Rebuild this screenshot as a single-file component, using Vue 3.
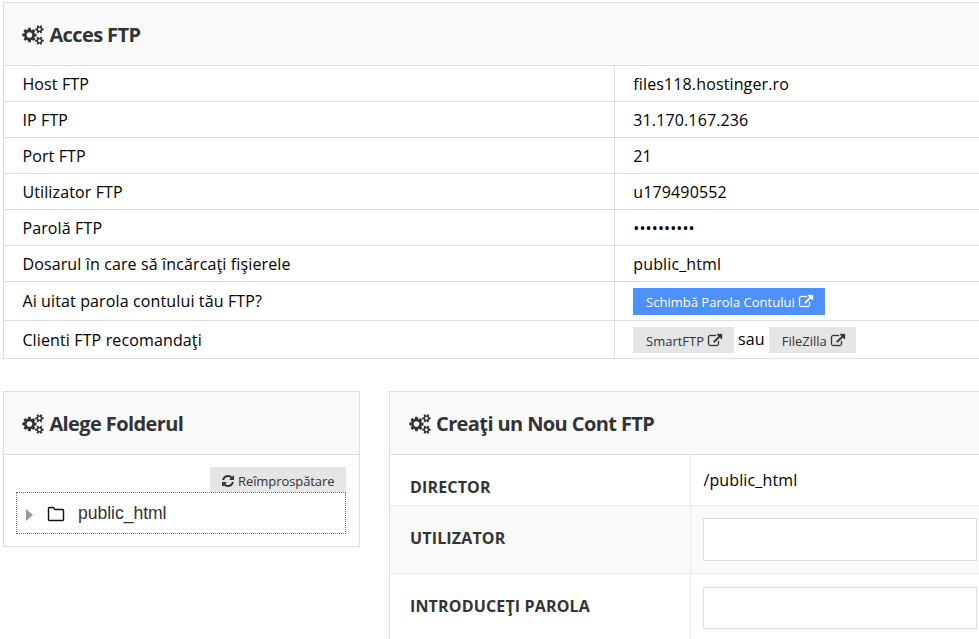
<script setup>
import { h } from 'vue'

const shapes = {
  cogs: {
    box: '0 0 1920 1792',
    d: 'M896 896q0-106-75-181t-181-75-181 75-75 181 75 181 181 75 181-75 75-181zm768 512q0-52-38-90t-90-38-90 38-38 90q0 53 37.5 90.5t90.5 37.5 90.5-37.5 37.5-90.5zm0-1024q0-52-38-90t-90-38-90 38-38 90q0 53 37.5 90.5t90.5 37.5 90.5-37.5 37.5-90.5zm-384 421v185q0 10-7 19.5t-16 10.5l-155 24q-11 35-32 76 34 48 90 115 7 11 7 20 0 12-7 19-23 30-82.5 89.5t-78.5 59.5q-11 0-21-7l-115-90q-37 19-77 31-11 108-23 155-7 24-30 24h-186q-11 0-20-7.5t-10-17.5l-23-153q-34-10-75-31l-118 89q-7 7-20 7-11 0-21-8-144-133-144-160 0-9 7-19 10-14 41-53t47-61q-23-44-35-82l-152-24q-10-1-17-9.5t-7-19.5v-185q0-10 7-19.5t16-10.5l155-24q11-35 32-76-34-48-90-115-7-11-7-20 0-12 7-20 22-30 82-89t79-59q11 0 21 7l115 90q34-18 77-32 11-108 23-154 7-24 30-24h186q11 0 20 7.5t10 17.5l23 153q34 10 75 31l118-89q8-7 20-7 11 0 21 8 144 133 144 160 0 9-7 19-12 16-42 54t-45 60q23 48 34 82l152 23q10 2 17 10.5t7 19.5zm640 533v140q0 16-149 31-12 27-30 52 51 113 51 138 0 4-4 7-122 71-124 71-8 0-46-47t-52-68q-20 2-30 2t-30-2q-14 21-52 68t-46 47q-2 0-124-71-4-3-4-7 0-25 51-138-18-25-30-52-149-15-149-31v-140q0-16 149-31 13-29 30-52-51-113-51-138 0-4 4-7 4-2 35-20t59-34 30-16q8 0 46 46.5t52 67.5q20-2 30-2t30 2q51-71 92-112l6-2q4 0 124 70 4 3 4 7 0 25-51 138 17 23 30 52 149 15 149 31zm0-1024v140q0 16-149 31-12 27-30 52 51 113 51 138 0 4-4 7-122 71-124 71-8 0-46-47t-52-68q-20 2-30 2t-30-2q-14 21-52 68t-46 47q-2 0-124-71-4-3-4-7 0-25 51-138-18-25-30-52-149-15-149-31v-140q0-16 149-31 13-29 30-52-51-113-51-138 0-4 4-7 4-2 35-20t59-34 30-16q8 0 46 46.5t52 67.5q20-2 30-2t30 2q51-71 92-112l6-2q4 0 124 70 4 3 4 7 0 25-51 138 17 23 30 52 149 15 149 31z',
  },
  external: {
    box: '0 0 1792 1792',
    d: 'M1408 928v320q0 119-84.5 203.5t-203.5 84.5h-832q-119 0-203.5-84.5t-84.5-203.5v-832q0-119 84.5-203.5t203.5-84.5h704q14 0 23 9t9 23v64q0 14-9 23t-23 9h-704q-66 0-113 47t-47 113v832q0 66 47 113t113 47h832q66 0 113-47t47-113v-320q0-14 9-23t23-9h64q14 0 23 9t9 23zm384-864v512q0 26-19 45t-45 19-45-19l-176-176-652 652q-10 10-23 10t-23-10l-114-114q-10-10-10-23t10-23l652-652-176-176q-19-19-19-45t19-45 45-19h512q26 0 45 19t19 45z',
  },
  refresh: {
    box: '128 0 1536 1792',
    d: 'M1639 1056q0 5-1 7-64 268-268 434.5t-478 166.5q-146 0-282.5-55t-243.5-157l-129 129q-19 19-45 19t-45-19-19-45v-448q0-26 19-45t45-19h448q26 0 45 19t19 45-19 45l-137 137q71 66 161 102t187 36q134 0 250-65t186-179q11-17 53-117 8-23 30-23h192q13 0 22.5 9.5t9.5 22.5zm25-800v448q0 26-19 45t-45 19h-448q-26 0-45-19t-19-45 19-45l138-138q-148-137-349-137-134 0-250 65t-186 179q-11 17-53 117-8 23-30 23h-199q-13 0-22.5-9.5t-9.5-22.5v-7q65-268 270-434.5t480-166.5q146 0 284 55.5t245 156.5l130-129q19-19 45-19t45 19 19 45z',
  },
}

const Icon = (props) =>
  h('svg', { viewBox: shapes[props.name].box, fill: 'currentColor', 'aria-hidden': 'true' }, [
    h('path', { d: shapes[props.name].d }),
  ])
Icon.props = ['name']

const rows = [
  ['Host FTP', 'files118.hostinger.ro'],
  ['IP FTP', '31.170.167.236'],
  ['Port FTP', '21'],
  ['Utilizator FTP', 'u179490552'],
  ['Parolă FTP', '••••••••••'],
  ['Dosarul în care să încărcaţi fişierele', 'public_html'],
]
</script>

<template>
  <main class="page">
    <section class="panel open">
      <h2 class="head"><Icon name="cogs" class="cogs" />Acces FTP</h2>
      <div v-for="row in rows" :key="row[0]" class="row">
        <div class="key">{{ row[0] }}</div>
        <div class="val">{{ row[1] }}</div>
      </div>
      <div class="row forgot">
        <div class="key">Ai uitat parola contului tău FTP?</div>
        <div class="val">
          <a class="btn blue"><span>Schimbă Parola Contului</span><Icon name="external" class="ext" /></a>
        </div>
      </div>
      <div class="row clients">
        <div class="key">Clienti FTP recomandaţi</div>
        <div class="val">
          <a class="btn smart"><span>SmartFTP</span><Icon name="external" class="ext" /></a>
          <span class="or">sau</span>
          <a class="btn zilla"><span>FileZilla</span><Icon name="external" class="ext" /></a>
        </div>
      </div>
    </section>

    <div class="columns">
      <section class="panel folder">
        <h2 class="head"><Icon name="cogs" class="cogs" />Alege Folderul</h2>
        <div class="folder-body">
          <a class="btn reload"><Icon name="refresh" class="ref" /><span>Reîmprospătare</span></a>
          <div class="tree">
            <i class="arrow"></i>
            <svg class="dir" viewBox="0 0 18 16" fill="none" stroke="#111" stroke-width="1.4" stroke-linejoin="round">
              <path d="M1.5 2.5Q1.5 1.5 2.5 1.5H6Q7 1.5 7.2 2.5Q7.5 3.5 8.5 3.5H15.5Q16.5 3.5 16.5 4.5V13.5Q16.5 14.5 15.5 14.5H2.5Q1.5 14.5 1.5 13.5Z" />
            </svg>
            <span class="dir-name">public_html</span>
          </div>
        </div>
      </section>

      <section class="panel open create">
        <h2 class="head"><Icon name="cogs" class="cogs" />Creaţi un Nou Cont FTP</h2>
        <div class="field first">
          <label>DIRECTOR</label>
          <div class="control">/public_html</div>
        </div>
        <div class="field shade">
          <label>UTILIZATOR</label>
          <div class="control"><input type="text" class="tall" /></div>
        </div>
        <div class="field">
          <label>INTRODUCEŢI PAROLA</label>
          <div class="control"><input type="password" /></div>
        </div>
      </section>
    </div>
  </main>
</template>

<style>
body {
  background: #fff;
  overflow: hidden;
}
</style>

<style scoped>
.page {
  box-sizing: border-box;
  height: 639px;
  overflow: hidden;
  padding: 2px 0 0 3px;
  font: 16px/22px "Open Sans", "Noto Sans", sans-serif;
  letter-spacing: 0.13px;
  color: #000;
}
.page * {
  box-sizing: border-box;
}
.panel {
  border: 1px solid #ddd;
  background: #fff;
}
.open {
  border-right: 0;
}
.head {
  display: flex;
  align-items: center;
  height: 62px;
  margin: 0;
  padding: 2px 0 0 18px;
  background: #fafafa;
  color: #333;
  font-size: 20px;
  font-weight: 700;
  letter-spacing: -0.6px;
  white-space: nowrap;
}
.cogs {
  width: 22px;
  height: 20px;
  margin-right: 5.4px;
  flex: none;
}
.row {
  display: grid;
  grid-template-columns: 610px 1fr;
  height: 36px;
  border-top: 1px solid #ddd;
}
.key {
  display: flex;
  align-items: center;
  padding: 0 0 0 18.4px;
}
.val {
  display: flex;
  align-items: center;
  padding: 0 0 0 18.3px;
  border-left: 1px solid #ddd;
}
.forgot {
  height: 39px;
}
.clients {
  height: 38px;
}
.forgot .val,
.clients .val {
  align-items: flex-start;
  padding: 6px 0 0 18px;
}
.btn {
  display: flex;
  align-items: center;
  height: 26px;
  padding: 2px 12px 0 13px;
  background: #e5e5e5;
  color: #333;
  font-size: 13px;
  line-height: 20px;
  letter-spacing: 0;
  white-space: nowrap;
}
.ext {
  width: 14px;
  height: 14px;
  margin: 0 0 1px 4px;
  flex: none;
  stroke: currentColor;
  stroke-width: 40px;
  overflow: visible;
}
.blue {
  width: 192px;
  height: 27px;
  padding-top: 0;
  background: #4d90fe;
  color: #fff;
  letter-spacing: 0.02px;
}
.blue .ext {
  margin-bottom: 0;
}
.smart {
  width: 101px;
}
.zilla {
  width: 87px;
}
.or {
  margin: 1px 4px 0;
}
.columns {
  display: grid;
  grid-template-columns: 357px 1fr;
  gap: 29px;
  align-items: start;
  margin-top: 32px;
}
.panel.open:first-child {
  border-bottom: 1px solid #ddd;
}
.folder {
  height: 156px;
}
.folder-body {
  display: flex;
  flex-direction: column;
  align-items: flex-end;
  padding: 12px 13px 0 12px;
  border-top: 1px solid #ddd;
}
.reload {
  width: 136px;
  height: 25px;
  padding: 3px 11px 0 12px;
  letter-spacing: -0.08px;
}
.ref {
  width: 12px;
  height: 14px;
  margin-right: 4px;
  flex: none;
}
.tree {
  display: flex;
  align-items: center;
  width: 330px;
  height: 42px;
  padding-left: 9px;
  border: 1px dotted #777;
}
.arrow {
  width: 0;
  height: 0;
  margin-top: 3px;
  border-left: 7px solid #999;
  border-top: 6px solid transparent;
  border-bottom: 6px solid transparent;
}
.dir {
  width: 18px;
  height: 16px;
  margin: 2px 13px 0 14px;
}
.dir-name {
  color: #333;
  font: 17.6px/22px "Liberation Sans", Arial, sans-serif;
  letter-spacing: -0.05px;
}
.create {
  height: 300px;
}
.create .head {
  padding-left: 18.6px;
}
.field {
  display: grid;
  grid-template-columns: 300px 1fr;
  height: 68px;
  border-top: 1px solid #eaeaea;
}
.field label {
  padding: 21px 0 0 20px;
  color: #333;
  font-weight: 700;
  letter-spacing: 0.16px;
}
.field .control {
  padding: 12px 2px 0 12px;
  border-left: 1px solid #eaeaea;
}
.field.first {
  height: 51px;
  border-top-color: #ddd;
}
.first .control {
  padding: 14px 2px 0 12.4px;
}
.shade {
  background: #fafafa;
}
.field input {
  display: block;
  width: 274px;
  height: 42px;
  margin: 1px 0 0;
  padding: 0 10px;
  border: 1px solid #ddd;
  background: #fff;
  font: inherit;
}
.field .tall {
  height: 43px;
  margin: 0;
}
</style>
